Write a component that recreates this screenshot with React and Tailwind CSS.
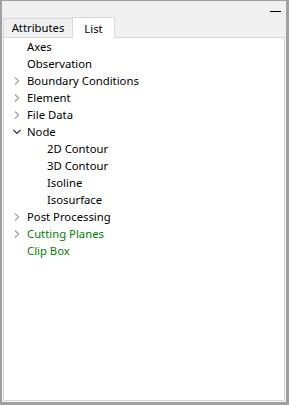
import { useState } from "react";

const items = [
  { label: "Axes" },
  { label: "Observation" },
  { label: "Boundary Conditions", arrow: "closed" },
  { label: "Element", arrow: "closed" },
  { label: "File Data", arrow: "closed" },
  { label: "Node", arrow: "open" },
  { label: "2D Contour", child: true },
  { label: "3D Contour", child: true },
  { label: "Isoline", child: true },
  { label: "Isosurface", child: true },
  { label: "Post Processing", arrow: "closed" },
  { label: "Cutting Planes", arrow: "closed", green: true },
  { label: "Clip Box", green: true },
];

function Chevron({ open }) {
  return (
    <svg width="8" height="8" viewBox="0 0 8 8" className="shrink-0">
      {open ? (
        <path d="M0.5 2 L4 5.5 L7.5 2" fill="none" stroke="#333" strokeWidth="1.2" />
      ) : (
        <path d="M2 0.5 L5.5 4 L2 7.5" fill="none" stroke="#a0a0a0" strokeWidth="1.2" />
      )}
    </svg>
  );
}

export default function App() {
  const [tab, setTab] = useState("List");

  return (
    <div
      className="w-[289px] h-[405px] bg-[#f0f0f0] border-t border-l-2 border-r-[3px] border-b-[3px] border-[#a0a0a0] flex flex-col text-[11.3px] text-[#000]"
      style={{ fontFamily: '"Noto Sans", "Open Sans", sans-serif' }}
    >
      {/* title strip */}
      <div className="h-[15px] flex justify-end items-start pr-[5px]">
        <div className="w-[11px] h-[1px] bg-black mt-[10px]"></div>
      </div>

      {/* tabs */}
      <div className="flex items-end pl-[1px] h-[21px]">
        <button
          onClick={() => setTab("Attributes")}
          className="w-[70px] h-[19px] border border-b-0 border-[#d9d9d9] bg-[#f0f0f0] leading-[18px] text-center"
        >
          Attributes
        </button>
        <button
          onClick={() => setTab("List")}
          className="w-[43px] h-[21px] border border-b-0 border-[#d9d9d9] bg-white leading-[22px] -ml-[1px] relative top-[1px] text-center"
        >
          List
        </button>
      </div>

      {/* tree */}
      <div className="flex-1 mx-[1px] mb-[1px] bg-white border border-[#d9d9d9]">
        {items.map((it) => (
          <div key={it.label} className="h-[17px] flex items-center">
            <div className="w-[23px] flex justify-center pl-[3px]">
              {it.arrow && <Chevron open={it.arrow === "open"} />}
            </div>
            <span
              className={`${it.child ? "pl-[20px]" : ""} ${
                it.green ? "text-[#008000]" : "text-[#000000]"
              } leading-[17px]`}
            >
              {it.label}
            </span>
          </div>
        ))}
      </div>
    </div>
  );
}
